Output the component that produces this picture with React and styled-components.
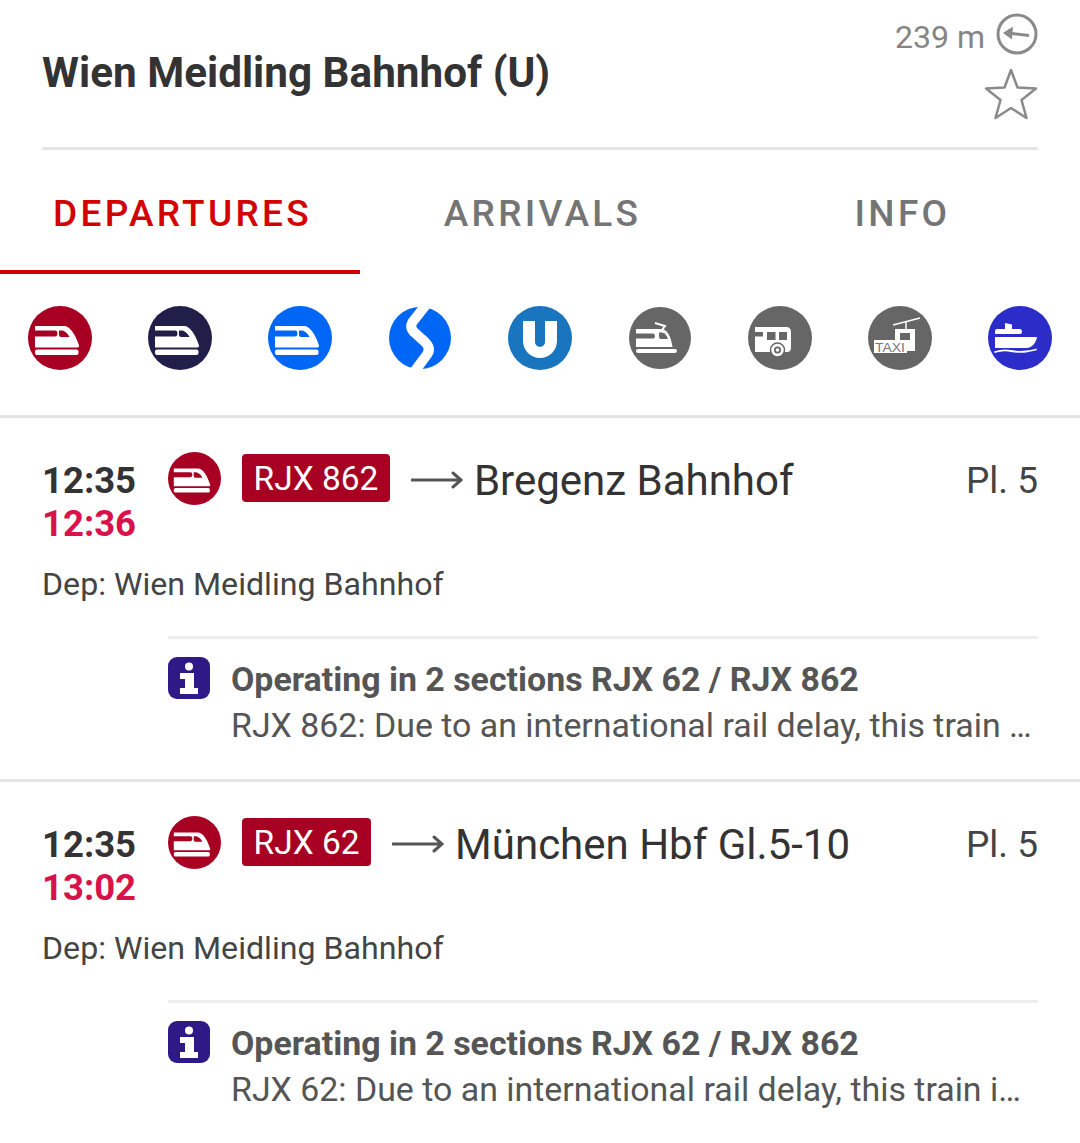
import React, { useState } from 'react';
import styled, { createGlobalStyle } from 'styled-components';

const GlobalStyle = createGlobalStyle`
  html, body {
    margin: 0;
    padding: 0;
    background: #fff;
    font-family: Roboto, "Liberation Sans", sans-serif;
  }
`;

const RED = '#a80022';
const NAVY = '#211e4a';
const BLUE = '#0066f5';
const METRO = '#1a75bf';
const GREY = '#666666';
const SHIP = '#2c2cc8';

const IconSvg = styled.svg`
  display: block;
  flex: none;
  width: ${(p) => p.$size}px;
  height: ${(p) => p.$size}px;
`;

function TrainIcon({ tone, size = 64 }) {
  return (
    <IconSvg $size={size} viewBox="0 0 64 64">
      <circle cx="32" cy="32" r="32" fill={tone} />
      <path
        fill="#fff"
        d="M7 20H36C42 20 47 28 51 39.500Q51.500 41.500 49.500 41.500H7V30.500H27Q29.500 30.500 29.500 27.500Q29.500 24.500 27 24.500H7Z"
      />
      <path fill={tone} d="M31 24.500H34C37 25 40 28 41.500 31H33Q31 31 31 29Z" />
      <rect x="7" y="43.500" width="43.500" height="5.500" rx="2" fill="#fff" />
    </IconSvg>
  );
}

function SBahnIcon() {
  return (
    <IconSvg $size={64} viewBox="0 0 64 64">
      <circle cx="32" cy="32" r="31" fill={BLUE} />
      <path
        fill="none"
        stroke="#fff"
        strokeWidth="10"
        d="M38 -1L26 14Q20 21 27 27L37 36Q44 43 38 50L26 66"
      />
    </IconSvg>
  );
}

function MetroIcon() {
  return (
    <IconSvg $size={64} viewBox="0 0 64 64">
      <circle cx="32" cy="32" r="32" fill={METRO} />
      <path
        fill="#fff"
        d="M15 15H27V36A5 5 0 0 0 37 36V15H49V35A17 17 0 0 1 15 35Z"
      />
    </IconSvg>
  );
}

function TramIcon() {
  return (
    <IconSvg $size={64} viewBox="0 0 64 64">
      <circle cx="32" cy="32" r="31" fill={GREY} />
      <path fill="none" stroke="#fff" strokeWidth="2" d="M27 17L37 20L34 24" />
      <path
        fill="#fff"
        d="M8 23H33C39 23 43 30 44.500 41H8V32.500H25Q27 32.500 27 30Q27 27.500 25 27.500H8Z"
      />
      <path fill={GREY} d="M31 26.500H34C37 27 39 30 40 33H33Q31 33 31 31Z" />
      <rect x="8" y="43" width="41" height="4" rx="2" fill="#fff" />
    </IconSvg>
  );
}

function BusIcon() {
  return (
    <IconSvg $size={64} viewBox="0 0 64 64">
      <circle cx="32" cy="32" r="32" fill={GREY} />
      <path
        fill="#fff"
        d="M7 21H38Q43 21 43 26V42Q43 46 39 46H7V30.500H15V26H7Z"
      />
      <rect x="19" y="26" width="8.500" height="8" fill={GREY} />
      <rect x="31" y="26" width="8" height="8" fill={GREY} />
      <circle cx="29.500" cy="44" r="7" fill="#fff" stroke={GREY} strokeWidth="1.500" />
      <circle cx="29.500" cy="44" r="3.500" fill={GREY} />
      <circle cx="29.500" cy="44" r="1.800" fill="#fff" />
    </IconSvg>
  );
}

function CableIcon() {
  return (
    <IconSvg $size={64} viewBox="0 0 64 64">
      <circle cx="32" cy="32" r="32" fill={GREY} />
      <path fill="none" stroke="#fff" strokeWidth="1.500" d="M25 19L52 12M38 16V23" />
      <path fill="#fff" d="M27 23H47V45H38V34H27Z" />
      <rect x="32" y="27" width="10" height="7" fill={GREY} />
      <rect x="6" y="34" width="33" height="13" fill="#fff" />
      <text
        x="7"
        y="45.500"
        fontSize="13.500"
        fontFamily="Liberation Sans, sans-serif"
        fill="#777"
        textLength="30"
        lengthAdjust="spacingAndGlyphs"
      >
        TAXI
      </text>
    </IconSvg>
  );
}

function ShipIcon() {
  return (
    <IconSvg $size={64} viewBox="0 0 64 64">
      <circle cx="32" cy="32" r="32" fill={SHIP} />
      <path fill="#fff" d="M17 17L24 18.500V23H32Q34 23 34 25.500Q34 28 32 28H7V25Q7 23 9 23H17Z" />
      <path fill="#fff" d="M7 31H49C48 37 44 42 38 42H7Z" />
      <path fill="none" stroke="#fff" strokeWidth="1.800" strokeLinecap="round" d="M7 46Q15 43.500 23 45T38 45.500T48 43.500" />
    </IconSvg>
  );
}

function InfoIcon() {
  return (
    <IconSvg $size={42} viewBox="0 0 42 42">
      <rect width="42" height="42" rx="9" fill="#2d1a87" />
      <circle cx="21" cy="9.500" r="4" fill="#fff" />
      <path fill="#fff" d="M12 16H26V31H30V37H12V31H17V22H12Z" />
    </IconSvg>
  );
}

const Page = styled.div`
  width: 1080px;
  height: 1143px;
  overflow: hidden;
  background: #fff;
  color: #333;
`;

const Header = styled.header`
  display: flex;
  justify-content: space-between;
  align-items: flex-start;
  height: 147px;
  margin: 0 42px;
  border-bottom: 3px solid #e4e4e4;
`;

const Title = styled.h1`
  margin: 50px 0 0;
  font-size: 42.250px;
  line-height: 46px;
  font-weight: 700;
  color: #333;
`;

const HeaderSide = styled.div`
  display: flex;
  flex-direction: column;
  align-items: flex-end;
  padding-top: 13px;
`;

const Distance = styled.div`
  display: flex;
  align-items: flex-start;
  gap: 11px;
  margin-bottom: 10px;
  font-size: 32px;
  line-height: 42px;
  color: #858585;
`;

const DistanceValue = styled.span`
  padding-top: 3px;
`;

const Tabs = styled.nav`
  display: grid;
  grid-template-columns: repeat(3, 360px);
  height: 124px;
`;

const Tab = styled.button`
  border: 0;
  padding: 6px 0 0 5px;
  margin: 0;
  background: none;
  font: 500 37px Roboto, sans-serif;
  letter-spacing: 3.300px;
  color: ${(p) => (p.$active ? '#d40000' : '#757575')};
  border-bottom: 4px solid ${(p) => (p.$active ? '#d40000' : 'transparent')};
  cursor: pointer;
`;

const Filters = styled.div`
  display: grid;
  grid-template-columns: repeat(9, 120px);
  align-items: center;
  justify-items: center;
  height: 127px;
  padding-bottom: 14px;
  border-bottom: 3px solid #e4e4e4;
`;

const Journey = styled.article`
  padding: 41px 42px 0;
  height: 320px;
  border-bottom: 3px solid #e4e4e4;
`;

const TopRow = styled.div`
  display: flex;
  align-items: flex-start;
`;

const Times = styled.div`
  width: 126px;
  flex: none;
  font-size: 36.500px;
  line-height: 43px;
  font-weight: 700;
  color: #333;
`;

const Delayed = styled.div`
  color: #d8124a;
`;

const TrainMark = styled.div`
  width: 74px;
  flex: none;
  margin-top: -7px;
`;

const Line = styled.div`
  flex: none;
  height: 48px;
  padding: 0 11.500px;
  margin-top: -5px;
  border-radius: 4px;
  background: ${RED};
  color: #fff;
  font-size: 33.500px;
  line-height: 50px;
`;

const ArrowMark = styled.svg`
  flex: none;
  width: 52px;
  height: 20px;
  margin: 11px 11px 0 21px;
`;

const Destination = styled.div`
  flex: 1;
  font-size: 42px;
  line-height: 48px;
  margin-top: -2px;
  color: #333;
  white-space: nowrap;
`;

const Platform = styled.div`
  flex: none;
  font-size: 37px;
  line-height: 44px;
  color: #444;
`;

const Origin = styled.div`
  margin-top: 19px;
  font-size: 32.150px;
  line-height: 40px;
  color: #444;
`;

const Notice = styled.div`
  display: flex;
  gap: 21px;
  margin: 32px 0 0 126px;
  padding-top: 18px;
  border-top: 3px solid #eeeeee;
`;

const NoticeText = styled.div`
  min-width: 0;
  flex: 1;
  color: #555;
`;

const NoticeTitle = styled.div`
  font-size: 33.900px;
  line-height: 46px;
  font-weight: 700;
  color: #555;
`;

const NoticeBody = styled.div`
  font-size: 33.900px;
  line-height: 46px;
  white-space: nowrap;
`;

const journeys = [
  {
    id: 'rjx862',
    delayed: '12:36',
    line: 'RJX 862',
    destination: 'Bregenz Bahnhof',
    body: 'RJX 862: Due to an international rail delay, this train …',
  },
  {
    id: 'rjx62',
    delayed: '13:02',
    line: 'RJX 62',
    destination: 'München Hbf Gl.5-10',
    body: 'RJX 62: Due to an international rail delay, this train i…',
  },
];

export default function App() {
  const [tab, setTab] = useState('DEPARTURES');

  return (
    <Page>
      <GlobalStyle />
      <Header>
        <Title>Wien Meidling Bahnhof (U)</Title>
        <HeaderSide>
          <Distance>
            <DistanceValue>239 m</DistanceValue>
            <svg width="42" height="42" viewBox="0 0 42 42">
              <circle cx="21" cy="21" r="19" fill="none" stroke="#8a8a8a" strokeWidth="3" />
              <path fill="none" stroke="#8a8a8a" strokeWidth="3" d="M12 20L33 22.500" />
              <path fill="#8a8a8a" d="M7 20L17 13.500L16 26.500Z" />
            </svg>
          </Distance>
          <svg width="54" height="52" viewBox="0 0 54 52">
            <path
              fill="none"
              stroke="#8a8a8a"
              strokeWidth="2.500"
              strokeLinejoin="round"
              d="M27 2L33.500 19.500L52 20.500L37.500 32L42.500 50L27 40L11.500 50L16.500 32L2 20.500L20.500 19.500Z"
            />
          </svg>
        </HeaderSide>
      </Header>

      <Tabs>
        {['DEPARTURES', 'ARRIVALS', 'INFO'].map((name) => (
          <Tab key={name} $active={tab === name} onClick={() => setTab(name)}>
            {name}
          </Tab>
        ))}
      </Tabs>

      <Filters>
        <TrainIcon tone={RED} />
        <TrainIcon tone={NAVY} />
        <TrainIcon tone={BLUE} />
        <SBahnIcon />
        <MetroIcon />
        <TramIcon />
        <BusIcon />
        <CableIcon />
        <ShipIcon />
      </Filters>

      {journeys.map((j) => (
        <Journey key={j.id}>
          <TopRow>
            <Times>
              12:35
              <Delayed>{j.delayed}</Delayed>
            </Times>
            <TrainMark>
              <TrainIcon tone={RED} size={53} />
            </TrainMark>
            <Line>{j.line}</Line>
            <ArrowMark viewBox="0 0 52 20">
              <path fill="none" stroke="#555" strokeWidth="3" strokeLinecap="round" d="M1 10H50M42 3L50 10L42 17" />
            </ArrowMark>
            <Destination>{j.destination}</Destination>
            <Platform>Pl. 5</Platform>
          </TopRow>
          <Origin>Dep: Wien Meidling Bahnhof</Origin>
          <Notice>
            <InfoIcon />
            <NoticeText>
              <NoticeTitle>Operating in 2 sections RJX 62 / RJX 862</NoticeTitle>
              <NoticeBody>{j.body}</NoticeBody>
            </NoticeText>
          </Notice>
        </Journey>
      ))}
    </Page>
  );
}
